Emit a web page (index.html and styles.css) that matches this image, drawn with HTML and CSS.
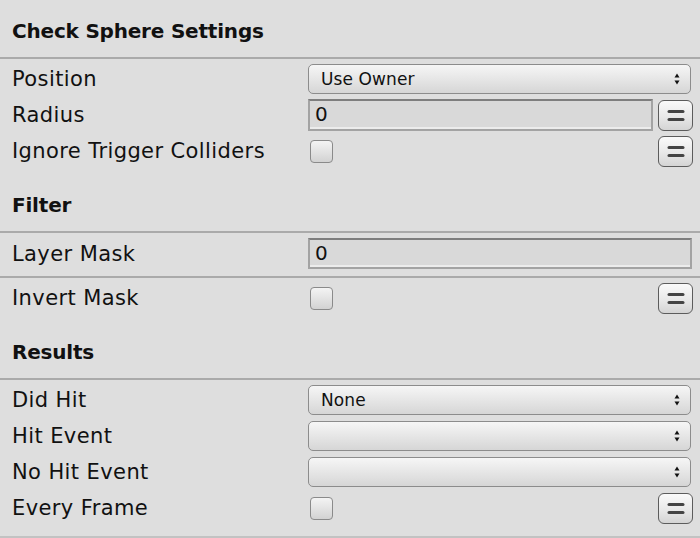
FILE: index.html
```html
<!DOCTYPE html>
<html>
<head>
<meta charset="utf-8">
<link rel="stylesheet" href="styles.css">
</head>
<body>
<div class="inspector">
  <section class="section first">
    <h2 class="section-title">Check Sphere Settings</h2>
    <div class="rows">
      <div class="row">
        <span class="label">Position</span>
        <div class="control">
          <div class="popup"><span class="popup-text">Use Owner</span>
            <svg class="arrows" width="6" height="12" viewBox="0 0 6 12"><path d="M0.5 4.5 L3 0.5 L5.5 4.5 Z M0.5 7.5 L5.5 7.5 L3 11.5 Z" fill="#111"/></svg>
          </div>
        </div>
      </div>
      <div class="row">
        <span class="label">Radius</span>
        <div class="control">
          <div class="textfield">0</div>
          <button class="var-btn"><svg width="18" height="11" viewBox="0 0 18 11"><rect x="0.5" y="0" width="17" height="3" rx="1.5" fill="#444"/><rect x="0.5" y="8" width="17" height="3" rx="1.5" fill="#444"/></svg></button>
        </div>
      </div>
      <div class="row">
        <span class="label">Ignore Trigger Colliders</span>
        <div class="control">
          <span class="checkbox"></span>
          <button class="var-btn"><svg width="18" height="11" viewBox="0 0 18 11"><rect x="0.5" y="0" width="17" height="3" rx="1.5" fill="#444"/><rect x="0.5" y="8" width="17" height="3" rx="1.5" fill="#444"/></svg></button>
        </div>
      </div>
    </div>
  </section>

  <section class="section">
    <h2 class="section-title">Filter</h2>
    <div class="row row-boxed">
      <span class="label">Layer Mask</span>
      <div class="control">
        <div class="textfield wide">0</div>
      </div>
    </div>
    <div class="rows">
      <div class="row">
        <span class="label">Invert Mask</span>
        <div class="control">
          <span class="checkbox"></span>
          <button class="var-btn"><svg width="18" height="11" viewBox="0 0 18 11"><rect x="0.5" y="0" width="17" height="3" rx="1.5" fill="#444"/><rect x="0.5" y="8" width="17" height="3" rx="1.5" fill="#444"/></svg></button>
        </div>
      </div>
    </div>
  </section>

  <section class="section last">
    <h2 class="section-title">Results</h2>
    <div class="rows">
      <div class="row">
        <span class="label">Did Hit</span>
        <div class="control">
          <div class="popup"><span class="popup-text">None</span>
            <svg class="arrows" width="6" height="12" viewBox="0 0 6 12"><path d="M0.5 4.5 L3 0.5 L5.5 4.5 Z M0.5 7.5 L5.5 7.5 L3 11.5 Z" fill="#111"/></svg>
          </div>
        </div>
      </div>
      <div class="row">
        <span class="label">Hit Event</span>
        <div class="control">
          <div class="popup"><span class="popup-text"></span>
            <svg class="arrows" width="6" height="12" viewBox="0 0 6 12"><path d="M0.5 4.5 L3 0.5 L5.5 4.5 Z M0.5 7.5 L5.5 7.5 L3 11.5 Z" fill="#111"/></svg>
          </div>
        </div>
      </div>
      <div class="row">
        <span class="label">No Hit Event</span>
        <div class="control">
          <div class="popup"><span class="popup-text"></span>
            <svg class="arrows" width="6" height="12" viewBox="0 0 6 12"><path d="M0.5 4.5 L3 0.5 L5.5 4.5 Z M0.5 7.5 L5.5 7.5 L3 11.5 Z" fill="#111"/></svg>
          </div>
        </div>
      </div>
      <div class="row">
        <span class="label">Every Frame</span>
        <div class="control">
          <span class="checkbox"></span>
          <button class="var-btn"><svg width="18" height="11" viewBox="0 0 18 11"><rect x="0.5" y="0" width="17" height="3" rx="1.5" fill="#444"/><rect x="0.5" y="8" width="17" height="3" rx="1.5" fill="#444"/></svg></button>
        </div>
      </div>
    </div>
  </section>
</div>
</body>
</html>
```

FILE: styles.css
```css
html, body {
  margin: 0;
  padding: 0;
  background: #dedede;
}

.inspector {
  width: 700px;
  font-family: "DejaVu Sans", "Liberation Sans", sans-serif;
  color: #111;
}

.section-title {
  margin: 0;
  height: 52px;
  padding: 10px 0 0 12px;
  display: flex;
  align-items: center;
  font-size: 20px;
  letter-spacing: -0.2px;
  font-weight: bold;
  border-bottom: 2px solid #aaaaaa;
}

.first .section-title {
  padding-top: 5px;
}

.rows {
  padding-top: 2px;
}

.last .rows {
  padding-bottom: 10px;
  border-bottom: 2px solid #c2c2c2;
}

.row {
  display: flex;
  align-items: center;
  height: 36px;
  padding: 0 7px 0 12px;
}

.row-boxed {
  height: 31px;
  padding-top: 5px;
  padding-bottom: 7px;
  border-bottom: 2px solid #aaaaaa;
}

.label {
  width: 296px;
  flex: none;
  font-size: 21px;
  letter-spacing: 0.4px;
  white-space: nowrap;
}

.control {
  flex: 1;
  display: flex;
  align-items: center;
  height: 100%;
}

.popup {
  flex: 1;
  margin-right: 2px;
  height: 30px;
  box-sizing: border-box;
  border: 1.5px solid #8c8c8c;
  border-radius: 5px;
  background: linear-gradient(#f6f6f6, #e6e6e6 50%, #d6d6d6);
  display: flex;
  align-items: center;
  padding: 0 10px 0 12px;
}

.popup-text {
  flex: 1;
  font-size: 17px;
  letter-spacing: 0.1px;
}

.arrows {
  display: block;
}

.textfield {
  flex: 1;
  height: 32px;
  box-sizing: border-box;
  border: 2px solid #a3a3a3;
  border-top-color: #7e7e7e;
  box-shadow: inset 0 -2px 0 #ececec;
  background: #d9d9d9;
  font-size: 20px;
  padding: 0 0 2px 5px;
  display: flex;
  align-items: center;
}

.textfield.wide {
  margin-right: 1px;
  height: 31px;
}

.var-btn {
  flex: none;
  margin-left: auto;
  width: 35px;
  height: 31px;
  box-sizing: border-box;
  border: 1.5px solid #5c5c5c;
  border-radius: 6px;
  background: linear-gradient(#fafafa, #e8e8e8 55%, #d4d4d4);
  padding: 0;
  display: flex;
  align-items: center;
  justify-content: center;
}

.textfield + .var-btn {
  margin-left: 5px;
}

.var-btn svg {
  display: block;
}

.checkbox {
  flex: none;
  width: 23px;
  height: 23px;
  box-sizing: border-box;
  margin-left: 2px;
  border: 1.5px solid #8a8a8a;
  border-radius: 4px;
  background: linear-gradient(#f4f4f4, #d2d2d2);
}
```
